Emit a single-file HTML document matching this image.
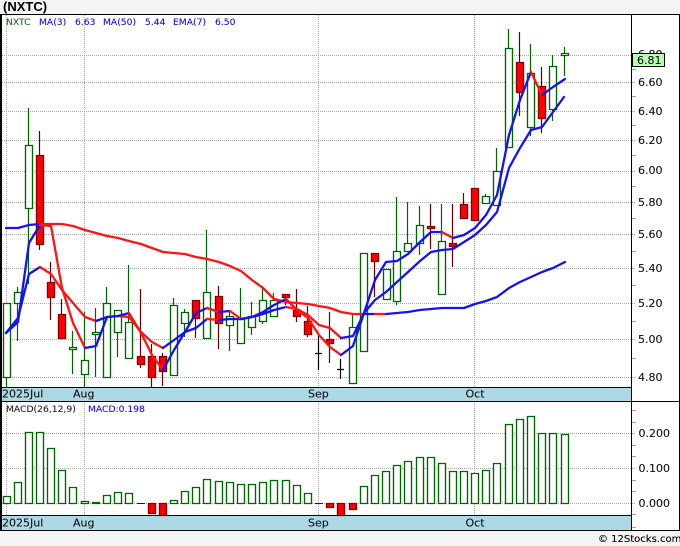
<!DOCTYPE html>
<html><head><meta charset="utf-8"><style>
html,body{margin:0;padding:0;background:#f4f4f4}
svg{display:block}
text{font-family:"DejaVu Sans",sans-serif;font-size:11px;fill:#111;stroke:#111;stroke-width:.12}
.l{font-size:9.2px;fill:#1010f0;stroke:#1010f0;stroke-width:.1}
</style></head><body>
<svg width="680" height="546" viewBox="0 0 680 546" xmlns="http://www.w3.org/2000/svg">
<rect width="680" height="546" fill="#f4f4f4"/>
<rect x="0" y="14" width="680" height="517" fill="#fff"/>
<rect x="0" y="387" width="632" height="14" fill="#add8e6"/>
<rect x="0" y="516" width="632" height="14" fill="#add8e6"/>
<g fill="none" stroke="#a8a8a8" stroke-dasharray="1 1" shape-rendering="crispEdges">
<path d="M0 55.5H636M0 82.5H636M0 111.5H636M0 140.5H636M0 171.5H636M0 202.5H636M0 234.5H636M0 268.5H636M0 303.5H636M0 339.5H636M0 377.5H636"/>
<path d="M0 433.5H636M0 468.5H636M0 503.5H636"/>
<path d="M6.5 15V387M84.5 15V387M318.5 15V387M474.5 15V387M6.5 402V515M84.5 402V515M318.5 402V515M474.5 402V515"/>
</g>
<path stroke="#a0a0a0" fill="none" shape-rendering="crispEdges" d="M632 69.5h4M632 96.5h4M632 125.5h4M632 155.5h4M632 186.5h4M632 218.5h4M632 251.5h4M632 285.5h4M632 321.5h4M632 358.5h4M632 410.5h4M632 422.5h4M632 445.5h4M632 456.5h4M632 480.5h4M632 491.5h4M632 514.5h4M632 527.5h4"/>
<path stroke="#006400" stroke-width="1.2" fill="none" d="M6.5 377V387M17.5 287V341M28.5 108V284M72.5 331V374M84.5 312V387M95.5 308V377M106.5 287V303M117.5 310V357M128.5 265V322M173.5 298V305M184.5 309V337M206.5 230V292M229.5 312V351M240.5 288V319M251.5 302V335M262.5 286V324M273.5 293V300M352.5 313V327M396.5 197V305M407.5 202V243M419.5 206V255M441.5 204V241M485.5 194V196M496.5 148V205M508.5 29V48M530.5 44V136M552.5 55V121M564.5 47V76"/>
<path stroke="#660000" stroke-width="1.2" fill="none" d="M39.5 131V250M50.5 262V320M61.5 299V338M140.5 289V368M151.5 344V387M162.5 353V386M195.5 300V338M218.5 286V349M285.5 294V305M296.5 289V322M307.5 306V337M329.5 312V363M374.5 261V297M430.5 204V249M452.5 204V267M463.5 193V204M519.5 32V116M541.5 67V133"/>
<path stroke="#000" stroke-width="1.2" fill="none" d="M318.5 333V370M315 353.5h7M340.5 359V379M337 369.5h7"/>
<path fill="#fff" stroke="#006400" stroke-width="1.35" d="M3.5 303.500h7v74h-7zM14.500 292.500h7v11h-7zM25.500 145.500h7v63h-7zM69.500 347.500h7v2h-7zM81.500 360.500h7v14h-7zM92.500 332.500h7v2h-7zM103.500 303.500h7v74h-7zM114.500 310.500h7v22h-7zM125.500 322.500h7v36h-7zM170.500 305.500h7v70h-7zM181.500 312.500h7v11h-7zM203.500 292.500h7v46h-7zM226.500 316.500h7v9h-7zM237.500 319.500h7v24h-7zM248.500 316.500h7v11h-7zM259.500 300.500h7v21h-7zM270.500 300.500h7v16h-7zM349.500 327.500h7v56h-7zM360.500 253.500h7v98h-7zM383.500 269.500h7v30h-7zM393.500 251.500h7v50h-7zM404.500 243.500h7v8h-7zM416.500 225.500h7v18h-7zM438.500 241.500h7v53h-7zM482.500 196.500h7v7h-7zM493.500 171.500h7v34h-7zM505.500 48.500h7v99h-7zM527.500 73.500h7v54h-7zM549.500 66.500h7v43h-7zM561.500 53.500h7v2h-7z"/>
<path fill="#ff0000" stroke="#880000" stroke-width="1.35" d="M36.500 155.500h7v89h-7zM47.500 282.500h7v15h-7zM58.500 314.500h7v24h-7zM137.500 356.500h7v8h-7zM148.500 356.500h7v21h-7zM159.500 356.500h7v15h-7zM192.500 300.500h7v18h-7zM215.500 296.500h7v27h-7zM282.500 294.500h7v3h-7zM293.500 310.500h7v6h-7zM304.500 321.500h7v13h-7zM326.500 339.500h7v4h-7zM371.500 253.500h7v8h-7zM427.500 226.500h7v2h-7zM449.500 243.500h7v3h-7zM460.500 204.500h7v14h-7zM471.500 188.500h7v32h-7zM516.500 62.500h7v30h-7zM538.500 86.500h7v32h-7z"/>
<g fill="none" stroke-width="2.3" stroke-linejoin="round" stroke-linecap="round">
<polyline stroke="#1414f0" points="6,228 18,228 29,225 40,224"/>
<polyline stroke="#ff1414" points="40,224 51,224 62,224 73,226 85,230 96,233 107,236 118,238 129,241 141,244 152,248 163,252 174,253 185,254 196,257 207,259 219,262 230,266 241,271 252,280 263,288 274,299 286,302 297,303 308,304 319,306 330,308 341,312 353,314 364,314"/>
<polyline stroke="#1414f0" points="364,314 375,314"/>
<polyline stroke="#ff1414" points="375,314 386,314"/>
<polyline stroke="#1414f0" points="386,314 397,313 408,312 420,310 431,309 442,308 453,308 464,308 475,304 486,301 497,297 509,288 520,282 531,277 542,272 553,268 565,262"/>

<polyline stroke="#1414f0" points="6,333 18,318 29,274 40,267"/>
<polyline stroke="#ff1414" points="40,267 51,274 62,290 73,303 85,317 96,321"/>
<polyline stroke="#1414f0" points="96,321 107,317 118,316"/>
<polyline stroke="#ff1414" points="118,316 129,317 141,332 152,342 163,348"/>
<polyline stroke="#1414f0" points="163,348 174,340 185,332 196,328 207,319"/>
<polyline stroke="#ff1414" points="207,319 219,320"/>
<polyline stroke="#1414f0" points="219,320 230,319 241,319 252,317 263,314 274,310 286,307"/>
<polyline stroke="#ff1414" points="286,307 297,309 308,315 319,325 330,328 341,338"/>
<polyline stroke="#1414f0" points="341,338 353,336 364,313 375,300 386,292 397,282 408,272 420,261 431,252 442,250 453,249 464,242 475,235 486,225 497,212 509,168 520,148 531,130 542,127 553,112 564,97"/>

<polyline stroke="#1414f0" points="6,333 18,322 29,243 40,225"/>
<polyline stroke="#ff1414" points="40,225 51,226 62,288 73,323 85,348"/>
<polyline stroke="#1414f0" points="85,348 96,346 107,317 118,316 129,313"/>
<polyline stroke="#ff1414" points="129,313 141,333 152,355 163,370"/>
<polyline stroke="#1414f0" points="163,370 174,350 185,332 196,313 207,308"/>
<polyline stroke="#ff1414" points="207,308 219,312"/>
<polyline stroke="#1414f0" points="219,312 230,311"/>
<polyline stroke="#ff1414" points="230,311 241,319"/>
<polyline stroke="#1414f0" points="241,319 252,317 263,312 274,305 286,299"/>
<polyline stroke="#ff1414" points="286,299 297,310 308,318 319,335 330,347 341,355"/>
<polyline stroke="#1414f0" points="341,355 353,346 364,313 375,280 386,262 397,261 408,254 420,242 431,232 442,232"/>
<polyline stroke="#ff1414" points="442,232 453,238"/>
<polyline stroke="#1414f0" points="453,238 464,235 475,228 486,215 497,195 509,135 520,100 531,72"/>
<polyline stroke="#ff1414" points="531,72 542,95"/>
<polyline stroke="#1414f0" points="542,95 553,87 565,79"/>
</g>
<path fill="#fff" stroke="#006400" stroke-width="1.35" d="M3.500 496.500h7v7h-7zM14.500 482.500h7v21h-7zM25.500 432.500h7v71h-7zM36.500 432.500h7v71h-7zM47.500 448.500h7v55h-7zM58.500 470.500h7v33h-7zM69.500 487.500h7v16h-7zM81.500 501.500h7v2h-7zM92.500 502.500h7v1h-7zM103.500 495.500h7v8h-7zM114.500 492.500h7v11h-7zM125.500 493.500h7v10h-7zM170.500 500.500h7v3h-7zM181.500 491.500h7v12h-7zM192.500 487.500h7v16h-7zM203.500 479.500h7v24h-7zM215.500 481.500h7v22h-7zM226.500 482.500h7v21h-7zM237.500 484.500h7v19h-7zM248.500 484.500h7v19h-7zM259.500 482.500h7v21h-7zM270.500 480.500h7v23h-7zM282.500 480.500h7v23h-7zM293.500 485.500h7v18h-7zM304.500 493.500h7v10h-7zM360.500 486.500h7v17h-7zM371.500 475.500h7v28h-7zM382.500 471.500h7v32h-7zM393.500 465.500h7v38h-7zM404.500 461.500h7v42h-7zM416.500 457.500h7v46h-7zM427.500 457.500h7v46h-7zM438.500 463.500h7v40h-7zM449.500 471.500h7v32h-7zM460.500 471.500h7v32h-7zM471.500 473.500h7v30h-7zM482.500 470.500h7v33h-7zM493.500 463.500h7v40h-7zM505.500 424.500h7v79h-7zM516.500 419.500h7v84h-7zM527.500 416.500h7v87h-7zM538.500 433.500h7v70h-7zM549.500 433.500h7v70h-7zM561.500 434.500h7v69h-7z"/>
<path fill="#ff0000" stroke="#880000" stroke-width="1.35" d="M148.500 503.500h7v10h-7zM159.500 503.500h7v12h-7zM326.500 503.500h7v4h-7zM337.500 503.500h7v12h-7zM349.500 503.500h7v6h-7z"/>
<path stroke="#660000" fill="none" shape-rendering="crispEdges" d="M137 503.500h8M315 503.500h8"/>
<g fill="none" stroke="#000" shape-rendering="crispEdges">
<path d="M0 14.500H680M0 401.500H680M0 530.500H680M0 387.500H632M0 515.500H632M631.500 14V531M679.500 14V531"/>
<path stroke-width="2" d="M1 14V531"/>
</g>
<text x="3" y="11" style="font-family:'Liberation Sans',sans-serif;font-weight:700;font-size:13px;fill:#000;stroke:none">(NXTC)</text>
<text class="l" x="6" y="25" style="fill:#1a6a1a;stroke:#1a6a1a">NXTC</text>
<text class="l" x="39" y="25">MA(3)</text>
<text class="l" x="75" y="25">6.63</text>
<text class="l" x="103" y="25">MA(50)</text>
<text class="l" x="145" y="25">5.44</text>
<text class="l" x="173" y="25">EMA(7)</text>
<text class="l" x="215" y="25">6.50</text>
<text class="l" x="6" y="412" style="fill:#222;stroke:#222">MACD(26,12,9)</text>
<text class="l" x="88" y="412">MACD:0.198</text>
<text x="638" y="58">6.80</text>
<text x="638" y="86">6.60</text>
<text x="638" y="115">6.40</text>
<text x="638" y="144">6.20</text>
<text x="638" y="174">6.00</text>
<text x="638" y="206">5.80</text>
<text x="638" y="238">5.60</text>
<text x="638" y="272">5.40</text>
<text x="638" y="307">5.20</text>
<text x="638" y="343">5.00</text>
<text x="638" y="381">4.80</text>
<rect x="632.500" y="53.500" width="32" height="13" fill="#b4ffb4" stroke="#000" shape-rendering="crispEdges"/>
<text x="637" y="64">6.81</text>
<text x="638.500" y="437">0.200</text>
<text x="638.500" y="472">0.100</text>
<text x="638.500" y="507">0.000</text>
<text x="2" y="397.500">2025Jul</text>
<text x="73" y="397.500">Aug</text>
<text x="308" y="397.500">Sep</text>
<text x="465.500" y="397.500">Oct</text>
<text x="2" y="526.500">2025Jul</text>
<text x="73" y="526.500">Aug</text>
<text x="308" y="526.500">Sep</text>
<text x="465.500" y="526.500">Oct</text>
<text x="598" y="542" style="font-size:10px;fill:#000;stroke:#000">© 12Stocks.com</text>
</svg>
</body></html>
